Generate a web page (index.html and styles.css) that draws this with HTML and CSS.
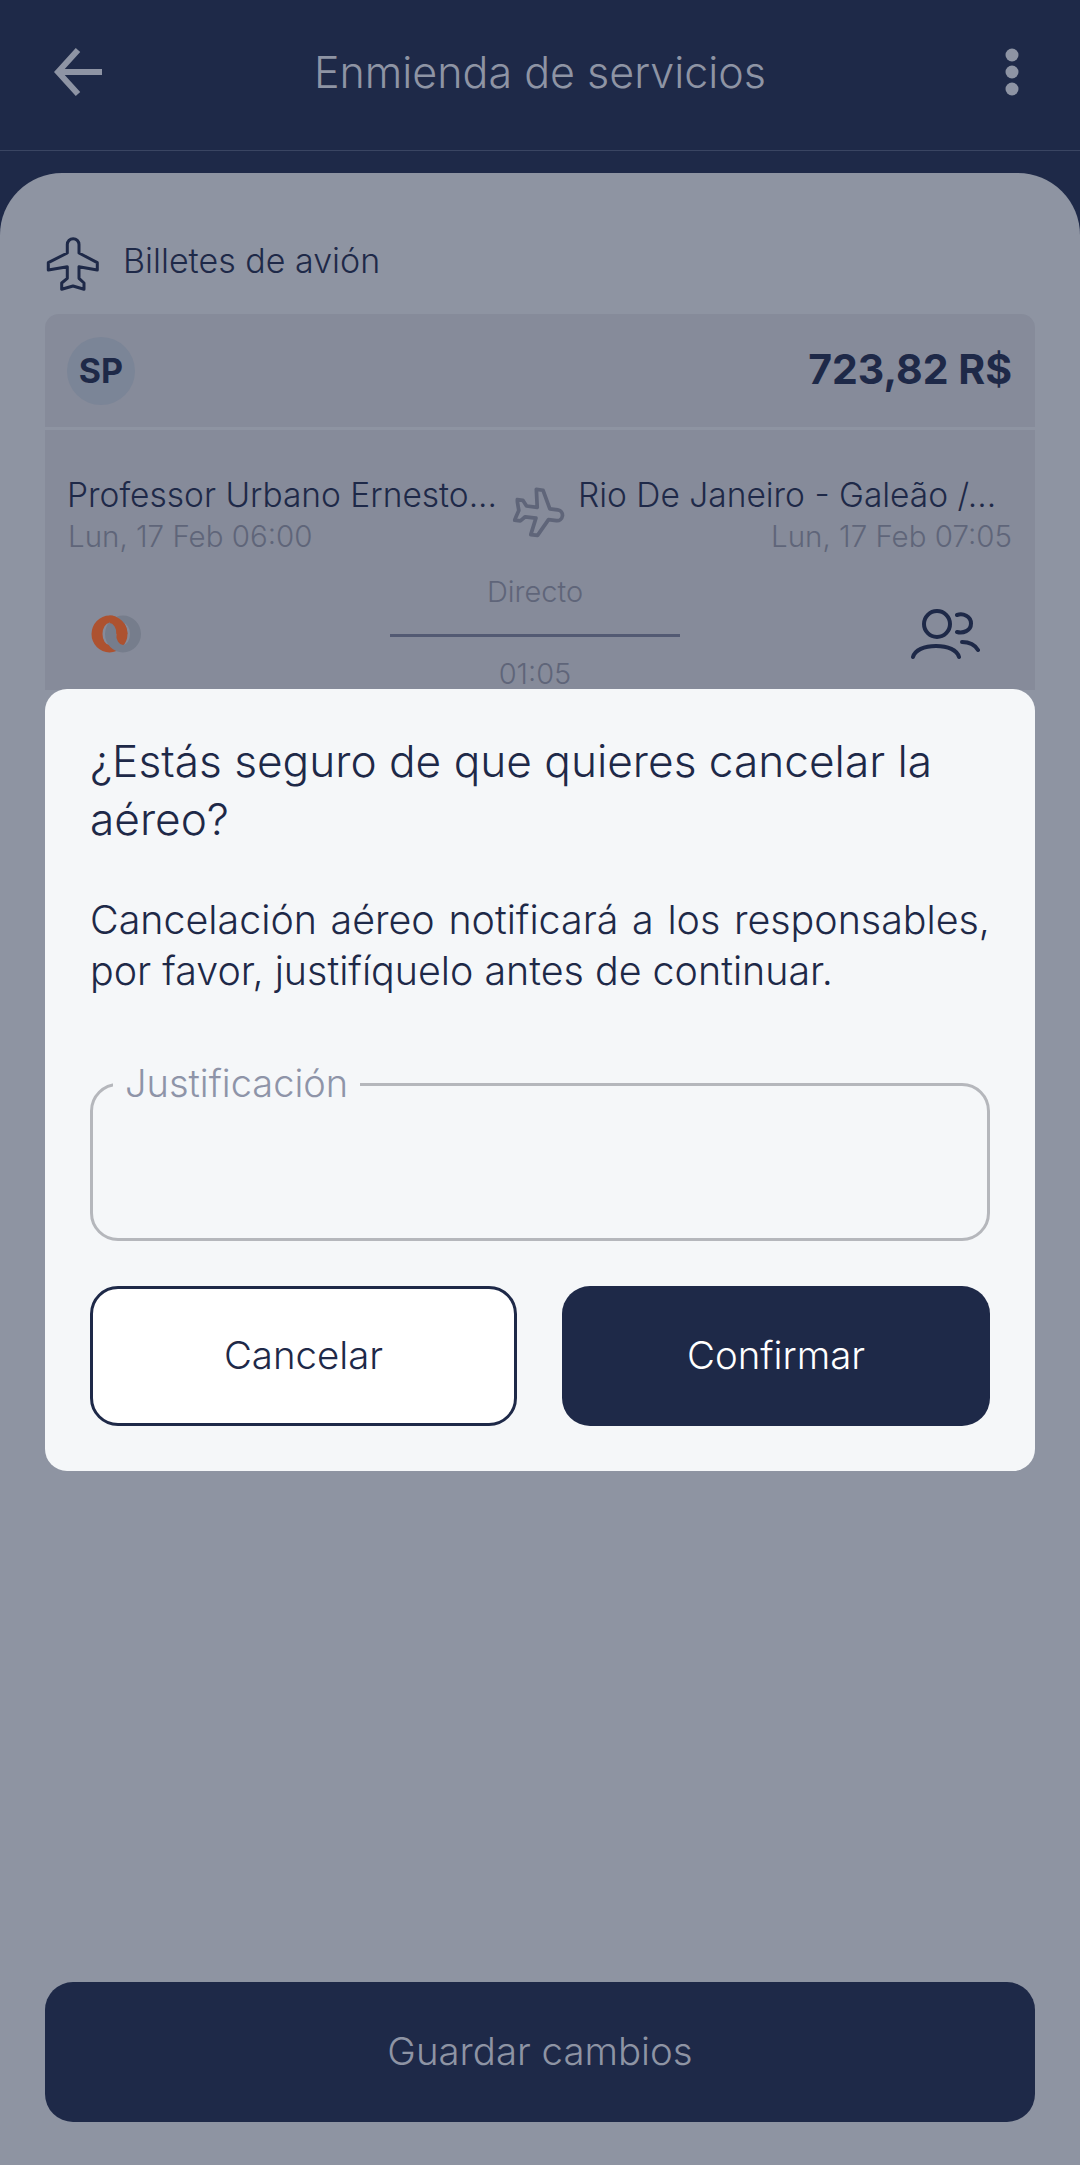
FILE: index.html
```html
<!DOCTYPE html>
<html lang="es">
<head>
<meta charset="utf-8">
<title>Enmienda de servicios</title>
<link rel="stylesheet" href="styles.css">
</head>
<body>
<div class="app">
  <header class="topbar">
    <svg class="back" width="50" height="50" viewBox="0 0 50 50"><path d="M24 3 4 25l20 22M4 25h44"/></svg>
    <h1 class="topbar-title">Enmienda de servicios</h1>
    <svg class="more" width="14" height="48" viewBox="0 0 14 48"><circle cx="7" cy="7" r="6.5"/><circle cx="7" cy="24" r="6.5"/><circle cx="7" cy="41" r="6.5"/></svg>
  </header>
  <main class="sheet">
    <div class="section-head">
      <svg class="plane" width="56" height="56" viewBox="1 0 56 56"><path d="M23.3 18V9.5a5.85 5.85 0 0 1 11.7 0V18L53.3 27.7V35L35 31.7V43.3L40 48V54.3L29 51 17.7 54.3V48L23.3 43.3V31.7L4.3 35V27.7Z"/></svg>
      <span class="section-title">Billetes de avión</span>
    </div>
    <section class="card">
      <div class="card-head">
        <span class="avatar">SP</span>
        <span class="price">723,82 R$</span>
      </div>
      <div class="card-body">
        <div class="route">
          <div class="stop">
            <div class="place">Professor Urbano Ernesto...</div>
            <div class="when">Lun, 17 Feb 06:00</div>
          </div>
          <svg class="plane plane-dim" width="52" height="52" viewBox="1 0 56 56"><path d="M23.3 18V9.5a5.85 5.85 0 0 1 11.7 0V18L53.3 27.7V35L35 31.7V43.3L40 48V54.3L29 51 17.7 54.3V48L23.3 43.3V31.7L4.3 35V27.7Z"/></svg>
          <div class="stop stop-end">
            <div class="place">Rio De Janeiro - Galeão /...</div>
            <div class="when">Lun, 17 Feb 07:05</div>
          </div>
        </div>
        <div class="details">
          <svg class="airline" width="52" height="40" viewBox="0 0 52 40">
            <clipPath id="ring-front"><rect x="19.5" y="0" width="33" height="20"/></clipPath>
            <path class="ring-orange" d="M1.5 20a18 18.5 0 1 0 36 0a18 18.5 0 1 0-36 0ZM12.5 20a7 11 0 1 0 14 0a7 11 0 1 0-14 0Z"/>
            <path class="ring-grey" d="M15 20a18 18.5 0 1 0 36 0a18 18.5 0 1 0-36 0ZM26 20a7 11 0 1 0 14 0a7 11 0 1 0-14 0Z"/>
            <path class="ring-orange" clip-path="url(#ring-front)" d="M1.5 20a18 18.5 0 1 0 36 0a18 18.5 0 1 0-36 0ZM12.5 20a7 11 0 1 0 14 0a7 11 0 1 0-14 0Z"/>
          </svg>
          <div class="leg">
            <span class="leg-text">Directo</span>
            <span class="leg-line"></span>
            <span class="leg-text">01:05</span>
          </div>
          <svg class="people" width="70" height="52" viewBox="0 0 70 52"><circle cx="27" cy="15" r="13"/><path d="M3 48c2-7 11-11 23-11s21 4 23 11M47 6c6-2 14 1 14 8.5s-8 10-14 8.5M52 33c7 0 13 3 16 8"/></svg>
        </div>
      </div>
    </section>
    <button class="btn btn-primary btn-muted save" type="button">Guardar cambios</button>
  </main>

  <div class="dialog" role="dialog">
    <h2 class="dialog-title">¿Estás seguro de que quieres cancelar la aéreo?</h2>
    <p class="dialog-text">Cancelación aéreo notificará a los responsables, por favor, justifíquelo antes de continuar.</p>
    <div class="field"><span class="field-label">Justificación</span></div>
    <div class="actions">
      <button class="btn btn-outline" type="button">Cancelar</button>
      <button class="btn btn-primary" type="button">Confirmar</button>
    </div>
  </div>
</div>
</body>
</html>
```
FILE: styles.css
```css
* { box-sizing: border-box; }
html, body { margin: 0; padding: 0; }
body { background: #1e2948; font-family: Inter, "Liberation Sans", sans-serif; font-weight: 300; color: #1e2948; }
.app { position: relative; width: 1080px; height: 2165px; display: flex; flex-direction: column; overflow: hidden; background: #1e2948; }

.topbar { height: 151px; flex: none; display: grid; grid-template-columns: 1fr auto 1fr; align-items: center; padding: 0 61px 6px 54px; border-bottom: 1px solid #3a4562; }
.back { fill: none; stroke: #8e94a4; stroke-width: 6; }
.more { fill: #8e94a4; justify-self: end; }
.topbar-title { margin: 0 0 0 7px; font-size: 43px; font-weight: 300; color: #8e94a4; }

.sheet { flex: 1; margin-top: 22px; background: #8e94a2; border-radius: 62px 62px 0 0; padding: 62px 45px 43px; display: flex; flex-direction: column; }
.section-head { display: flex; align-items: center; gap: 23px; height: 56px; margin-bottom: 23px; }
.section-title { font-size: 34px; color: #1e2948; padding-bottom: 6px; margin-left: -1px; }
.plane { flex: none; fill: none; stroke: #1e2948; stroke-width: 3; stroke-linejoin: round; }
.plane-dim { stroke: #5f6579; stroke-width: 4; transform: rotate(97deg); }

.card { background: #868b9a; border-radius: 14px 14px 0 0; }
.card-head { height: 116px; padding: 0 23px 0 22px; display: flex; align-items: center; justify-content: space-between; border-bottom: 3px solid #8e94a2; }
.avatar { width: 68px; height: 68px; border-radius: 50%; background: #7b8597; display: flex; align-items: center; justify-content: center; font-size: 34px; font-weight: 700; }
.price { font-size: 41px; font-weight: 700; padding-bottom: 3px; }
.card-body { padding: 45px 23px 0; height: 260px; }
.route { display: flex; align-items: flex-start; justify-content: space-between; }
.stop { width: 433px; }
.stop-end { text-align: right; }
.place { font-size: 33.5px; line-height: 40px; white-space: nowrap; margin-left: -1px; }
.stop-end .place { text-align: left; }
.when { font-size: 29.5px; line-height: 36px; color: #5f6579; margin-top: 3px; }
.route .plane-dim { margin: 12px 0 0; }
.details { display: flex; align-items: center; justify-content: space-between; margin-top: 22px; padding: 0 32px 0 22px; }
.leg { display: flex; flex-direction: column; align-items: center; width: 290px; margin-left: 18px; }
.leg-text { font-size: 29px; line-height: 32px; color: #5f6579; }
.leg-line { width: 290px; height: 3px; background: #535a73; margin: 26px 0 21px; }
.airline { margin-top: 2px; }
.ring-orange { fill: #ad5230; fill-rule: evenodd; }
.ring-grey { fill: #767d8c; fill-rule: evenodd; }
.people { fill: none; stroke: #1e2948; stroke-width: 4; stroke-linecap: round; margin-top: 4px; }

.btn { height: 140px; border-radius: 28px; font-family: inherit; font-size: 38.4px; font-weight: 300; display: flex; align-items: center; justify-content: center; border: 0; padding: 0 0 3px; }
.btn-primary { background: #1e2948; color: #fff; }
.btn-outline { background: #fff; color: #1e2948; border: 3px solid #1e2948; }
.btn-muted { color: #8e94a4; }
.save { margin-top: auto; width: 100%; flex: none; }

.dialog { position: absolute; left: 45px; top: 689px; width: 990px; height: 782px; background: #f5f7f9; border-radius: 22px; padding: 43px 45px 45px; }
.dialog-title { margin: 0; font-size: 44.2px; font-weight: 300; line-height: 58px; }
.dialog-text { margin: 47px 0 0; font-size: 39.4px; line-height: 51px; text-align: justify; }
.field { position: relative; height: 158px; margin-top: 86px; border: 3px solid #b5b7bc; border-radius: 28px; }
.field-label { position: absolute; left: 20px; top: -24px; padding: 0 12px; background: #f5f7f9; font-size: 38px; line-height: 42px; color: #8e94a8; }
.actions { display: grid; grid-template-columns: 427px 428px; justify-content: space-between; margin-top: 45px; }
```
